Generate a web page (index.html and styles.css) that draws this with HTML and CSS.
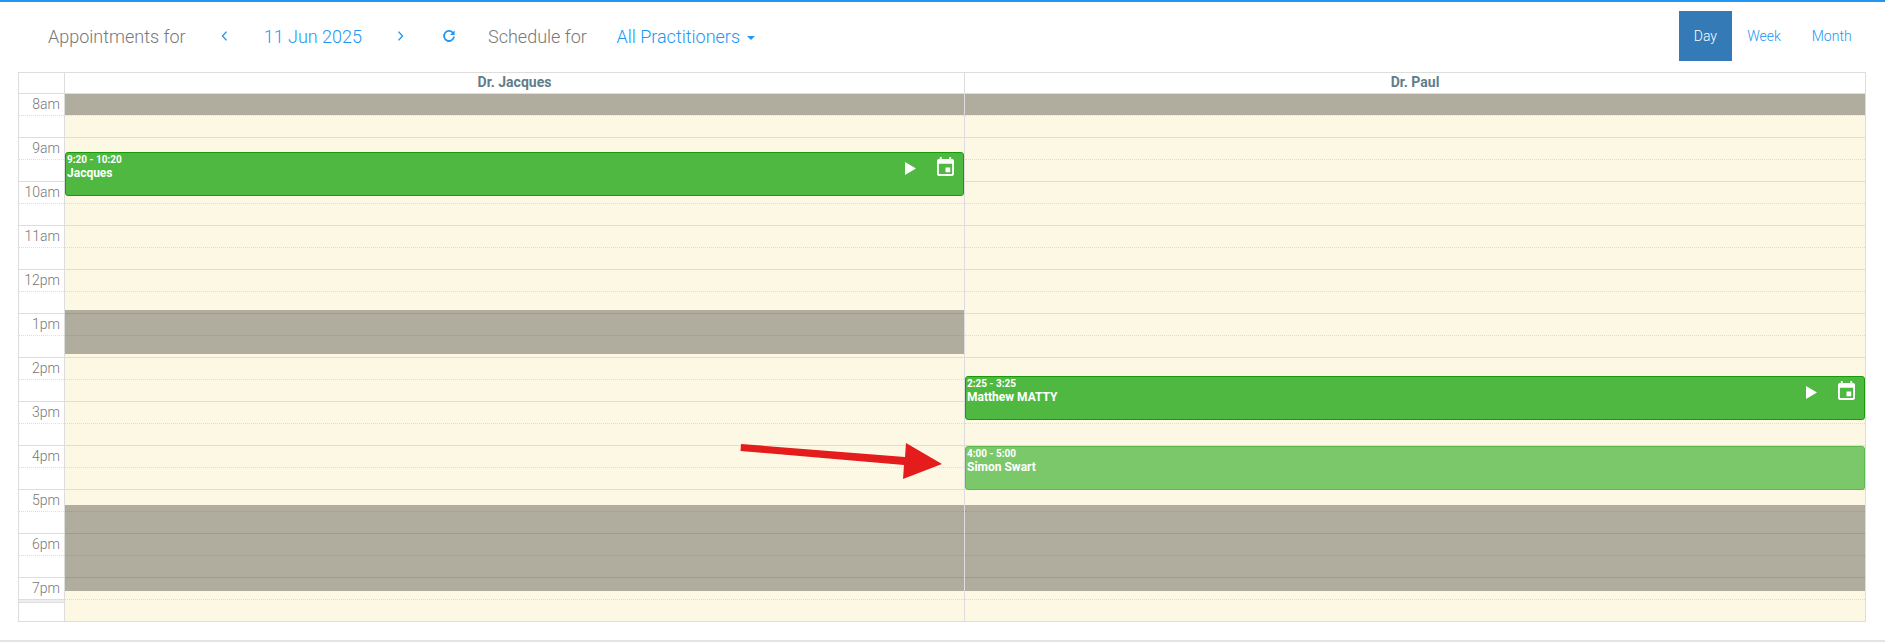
FILE: index.html
```html
<!DOCTYPE html>
<html lang="en">
<head>
<meta charset="utf-8">
<title>Appointments</title>
<link rel="stylesheet" href="styles.css">
</head>
<body>
<div class="page">
  <header class="toolbar">
    <div class="toolbar-left">
      <span class="label label-appointments">Appointments for</span>
      <a class="nav nav-prev" href="#" aria-label="Previous"><svg width="8" height="12" viewBox="0 0 8 12"><path d="M6.5 1.6 L2.5 6 L6.5 10.4" fill="none" stroke="#2196f3" stroke-width="1.4"/></svg></a>
      <a class="date" href="#">11 Jun 2025</a>
      <a class="nav nav-next" href="#" aria-label="Next"><svg width="8" height="12" viewBox="0 0 8 12"><path d="M1.5 1.6 L5.5 6 L1.5 10.4" fill="none" stroke="#2196f3" stroke-width="1.4"/></svg></a>
      <a class="nav nav-refresh" href="#" aria-label="Refresh"><svg width="14" height="14" viewBox="0 0 14 14"><path d="M11.2 4.2 A5 5 0 1 0 12 7.5" fill="none" stroke="#2196f3" stroke-width="1.8"/><path d="M12.6 1.4 V6 H8 Z" fill="#2196f3"/></svg></a>
      <span class="label label-schedule">Schedule for</span>
      <a class="date practitioners" href="#">All Practitioners<span class="caret"></span></a>
    </div>
    <div class="views">
      <a class="view active" href="#">Day</a>
      <a class="view" href="#">Week</a>
      <a class="view" href="#">Month</a>
    </div>
  </header>

  <section class="calendar">
    <div class="cal-head">
      <div class="axis-cell"></div>
      <div class="head-cell">Dr. Jacques</div>
      <div class="head-cell">Dr. Paul</div>
    </div>
    <div class="cal-body">
      <div class="axis">
        <div class="slot"><span class="hour">8am</span></div><div class="slot"><span class="hour">9am</span></div><div class="slot"><span class="hour">10am</span></div><div class="slot"><span class="hour">11am</span></div>
        <div class="slot"><span class="hour">12pm</span></div><div class="slot"><span class="hour">1pm</span></div><div class="slot"><span class="hour">2pm</span></div><div class="slot"><span class="hour">3pm</span></div>
        <div class="slot"><span class="hour">4pm</span></div><div class="slot"><span class="hour">5pm</span></div><div class="slot"><span class="hour">6pm</span></div><div class="slot"><span class="hour">7pm</span></div>
      </div>
      <div class="day">
        <div class="slot"></div><div class="slot"></div><div class="slot"></div><div class="slot"></div>
        <div class="slot"></div><div class="slot"></div><div class="slot"></div><div class="slot"></div>
        <div class="slot"></div><div class="slot"></div><div class="slot"></div><div class="slot"></div>
        <div class="closed closed-am"></div>
        <div class="closed closed-lunch"></div>
        <div class="closed closed-pm"></div>
        <div class="event event-jacques">
          <div class="event-time">9:20 - 10:20</div>
          <div class="event-name">Jacques</div>
          <div class="event-icons">
            <svg class="icon-play" width="11" height="13" viewBox="0 0 11 13"><path d="M0 0 L11 6.5 L0 13 Z" fill="#fff"/></svg>
            <svg class="icon-cal" width="17" height="19" viewBox="3 1 18 20"><path d="M17 12h-5v5h5v-5zM16 1v2H8V1H6v2H5c-1.11 0-1.99.9-1.99 2L3 19c0 1.1.89 2 2 2h14c1.1 0 2-.9 2-2V5c0-1.1-.9-2-2-2h-1V1h-2zm3 18H5V8h14v11z" fill="#fff"/></svg>
          </div>
        </div>
      </div>
      <div class="day day-last">
        <div class="slot"></div><div class="slot"></div><div class="slot"></div><div class="slot"></div>
        <div class="slot"></div><div class="slot"></div><div class="slot"></div><div class="slot"></div>
        <div class="slot"></div><div class="slot"></div><div class="slot"></div><div class="slot"></div>
        <div class="closed closed-am"></div>
        <div class="closed closed-pm"></div>
        <div class="event event-matthew">
          <div class="event-time">2:25 - 3:25</div>
          <div class="event-name">Matthew MATTY</div>
          <div class="event-icons">
            <svg class="icon-play" width="11" height="13" viewBox="0 0 11 13"><path d="M0 0 L11 6.5 L0 13 Z" fill="#fff"/></svg>
            <svg class="icon-cal" width="17" height="19" viewBox="3 1 18 20"><path d="M17 12h-5v5h5v-5zM16 1v2H8V1H6v2H5c-1.11 0-1.99.9-1.99 2L3 19c0 1.1.89 2 2 2h14c1.1 0 2-.9 2-2V5c0-1.1-.9-2-2-2h-1V1h-2zm3 18H5V8h14v11z" fill="#fff"/></svg>
          </div>
        </div>
        <div class="event event-simon">
          <div class="event-time">4:00 - 5:00</div>
          <div class="event-name">Simon Swart</div>
        </div>
      </div>
    </div>
    <div class="cal-divider"></div>
    <div class="cal-foot">
      <div class="axis-cell"></div>
      <div class="foot-cell"></div>
      <div class="foot-cell"></div>
    </div>
  </section>
  <svg class="arrow" width="210" height="44" viewBox="0 0 210 44"><path d="M1 3 L165 16 L166 2 L202 23 L163 38 L164 24 L0.5 10 Z" fill="#e51c1c"/></svg>
</div>
</body>
</html>
```
FILE: styles.css
```css
* { box-sizing: border-box; }
html, body { margin: 0; padding: 0; background: #fff; }
body {
  font-family: Roboto, "Liberation Sans", sans-serif;
  color: #777;
  overflow: hidden;
}
a { text-decoration: none; color: #2196f3; }

.page {
  position: relative;
  height: 642px;
  border-top: 2px solid #2196f3;
  border-bottom: 2px solid #e4e4e4;
  padding: 9px 18px 0 18px;
}

.toolbar {
  display: flex;
  justify-content: space-between;
  height: 50px;
  padding-left: 30px;
}
.toolbar-left {
  display: flex;
  align-items: center;
  font-size: 18px;
  font-weight: 300;
}
.label-appointments { margin-right: 34px; }
.nav { display: flex; align-items: center; }
.date { color: #2196f3; }
.nav-prev { margin-right: 36px; }
.nav-next { margin-left: 35px; }
.nav-refresh { margin-left: 37px; }
.label-schedule { margin-left: 32px; margin-right: 29.5px; }
.caret {
  display: inline-block;
  margin-left: 7px;
  vertical-align: middle;
  border-top: 4px solid #2196f3;
  border-left: 4px solid transparent;
  border-right: 4px solid transparent;
}

.views { display: flex; font-size: 14px; font-weight: 300; }
.view {
  display: flex;
  align-items: center;
  padding: 0 15.4px;
}
.view.active { background: #337ab7; color: #fff; width: 53px; justify-content: center; padding: 0; }

.calendar {
  margin-top: 11px;
  border: 1px solid #ddd;
  width: 1848px;
}
.cal-head, .cal-foot, .cal-body {
  display: grid;
  grid-template-columns: 46px 900px 1fr;
}
.cal-head { height: 21px; border-bottom: 1px solid #ddd; }
.axis-cell { border-right: 1px solid #ddd; }
.head-cell {
  font-size: 14px;
  font-weight: 700;
  color: #607d8b;
  text-align: center;
  line-height: 19px;
  border-right: 1px solid #ddd;
}
.head-cell:last-child { border-right: 0; }

.cal-body {
  height: 506px;
  border-bottom: 1px solid #ddd;
}
.axis { border-right: 1px solid #ddd; }

.slot {
  position: relative;
  height: 44px;
  border-bottom: 1px solid #ddd;
}
.slot::after {
  content: "";
  position: absolute;
  left: 0;
  right: 0;
  top: 21px;
  border-top: 1px dotted #ddd;
}
.slot:last-of-type { height: 22px; border-bottom: 0; }
.slot:last-of-type::after { display: none; }
.hour {
  display: block;
  font-size: 14px;
  font-weight: 300;
  text-align: right;
  padding-right: 4px;
  line-height: 20px;
}

.day {
  position: relative;
  background: #fdf8e4;
  border-right: 1px solid #ddd;
}
.day-last { border-right: 0; }
.closed { position: absolute; left: 0; right: 0; background: rgba(0, 0, 0, 0.3); }
.closed-am { top: 0; height: 21px; }
.closed-lunch { top: 216px; height: 44px; }
.closed-pm { top: 411px; height: 86px; }

.event {
  position: absolute;
  left: 0;
  right: 0;
  height: 44px;
  background: #4eb841;
  border: 1px solid #179b0a;
  border-radius: 3px;
  color: #fff;
  padding: 0 1px;
  font-weight: 700;
}
.event-jacques { top: 58px; }
.event-matthew { top: 282px; }
.event-simon { top: 352px; background: #7ac86a; border-color: #5cb94e; }
.event-time { font-size: 10px; line-height: 12px; margin-top: 1px; }
.event-name { font-size: 12px; line-height: 14px; }
.event-icons {
  position: absolute;
  top: 4px;
  right: 9px;
  display: flex;
  align-items: flex-start;
  gap: 21px;
}
.icon-play { margin-top: 5px; }

.cal-divider { height: 2px; background: #eee; }
.cal-foot { height: 19px; border-top: 1px solid #ddd; }
.foot-cell { background: #fdf8e4; border-right: 1px solid #ddd; }
.foot-cell:last-child { border-right: 0; }

.arrow { position: absolute; left: 740px; top: 439px; }
```
